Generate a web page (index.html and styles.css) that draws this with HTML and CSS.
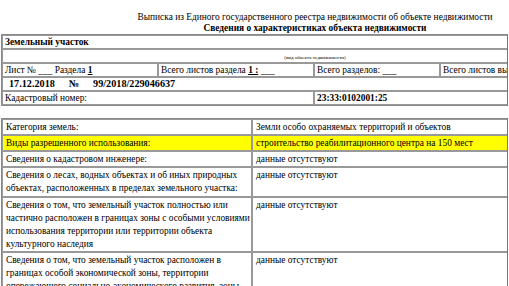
FILE: index.html
```html
<!DOCTYPE html>
<html lang="ru">
<head>
<meta charset="utf-8">
<link rel="stylesheet" href="styles.css">
</head>
<body>
<div class="page">
  <div class="head">
    <div class="title">Выписка из Единого государственного реестра недвижимости об объекте недвижимости</div>
    <div class="subtitle">Сведения о характеристиках объекта недвижимости</div>
  </div>
  <div class="clip">
    <table class="top">
      <colgroup><col class="c1"><col class="c2"><col class="c3"><col class="c4"></colgroup>
      <tr><td colspan="4" class="b">Земельный участок</td></tr>
      <tr><td colspan="4" class="kind">(вид объекта недвижимости)</td></tr>
      <tr>
        <td>Лист № ___ Раздела <u class="b">1</u></td>
        <td>Всего листов раздела <u class="b">1 :</u> ___</td>
        <td>Всего разделов: ___</td>
        <td>Всего листов выписки: ___</td>
      </tr>
      <tr><td colspan="4" class="b date"><span>17.12.2018</span><span>№</span><span>99/2018/229046637</span></td></tr>
      <tr><td colspan="2">Кадастровый номер:</td><td colspan="2" class="b">23:33:0102001:25</td></tr>
    </table>
  </div>
  <div class="clip lower">
    <table class="info">
      <colgroup><col class="l"><col class="r"></colgroup>
      <tr><td>Категория земель:</td><td>Земли особо охраняемых территорий и объектов</td></tr>
      <tr class="hl"><td>Виды разрешенного использования:</td><td>строительство реабилитационного центра на 150 мест</td></tr>
      <tr><td>Сведения о кадастровом инженере:</td><td>данные отсутствуют</td></tr>
      <tr class="loose"><td>Сведения о лесах, водных объектах и об иных природных объектах, расположенных в пределах земельного участка:</td><td>данные отсутствуют</td></tr>
      <tr><td>Сведения о том, что земельный участок полностью или частично расположен в границах зоны с особыми условиями использования территории или территории объекта культурного наследия</td><td>данные отсутствуют</td></tr>
      <tr><td>Сведения о том, что земельный участок расположен в границах особой экономической зоны, территории опережающего социально-экономического развития, зоны территориального развития в Российской Федерации, игорной зоны</td><td>данные отсутствуют</td></tr>
    </table>
  </div>
</div>
</body>
</html>
```
FILE: styles.css
```css
html, body {
  margin: 0;
  padding: 0;
  background: #fff;
  overflow: hidden;
}
body {
  font-family: "Liberation Serif", Tinos, "Times New Roman", Times, serif;
  font-size: 9.4px;
  color: #000;
  line-height: 12px;
}
table, td {
  font-family: inherit;
  font-size: inherit;
  line-height: inherit;
}
.page {
  width: 630px;
  padding-top: 12px;
}
.head {
  text-align: center;
}
.title {
  line-height: 11px;
}
.subtitle {
  font-weight: bold;
  line-height: 11px;
}
.clip {
  width: 506px;
  margin-left: 1px;
  overflow: hidden;
  border-right: 1px solid #777;
}
table {
  border-collapse: separate;
  border-spacing: 0;
  table-layout: fixed;
  border: 1px solid #888;
}
td {
  border: 1px solid #999;
  padding: 0 2px;
  vertical-align: top;
  height: 12px;
  white-space: nowrap;
  overflow: hidden;
}
.top { width: 626px; }
.c1 { width: 156px; }
.c2 { width: 156px; }
.c3 { width: 126px; }
.c4 { width: 188px; }
.b { font-weight: bold; }
.kind {
  text-align: center;
  font-size: 5px;
  line-height: 6px;
  vertical-align: bottom;
  padding-bottom: 1px;
  height: 11px;
}
u { text-decoration: underline; }
.date { font-size: 10.2px; }
.date span { margin-left: 4px; margin-right: 10px; }
.lower { margin-top: 12px; }
.info { width: 507px; }
.l { width: 250px; }
.r { width: 257px; }
.info td {
  white-space: normal;
  line-height: 13px;
  height: 13px;
  padding: 1px 0 0 3px;
}
.info .loose td { padding-bottom: 1px; }
.hl td { background: #ffff00; }
```
